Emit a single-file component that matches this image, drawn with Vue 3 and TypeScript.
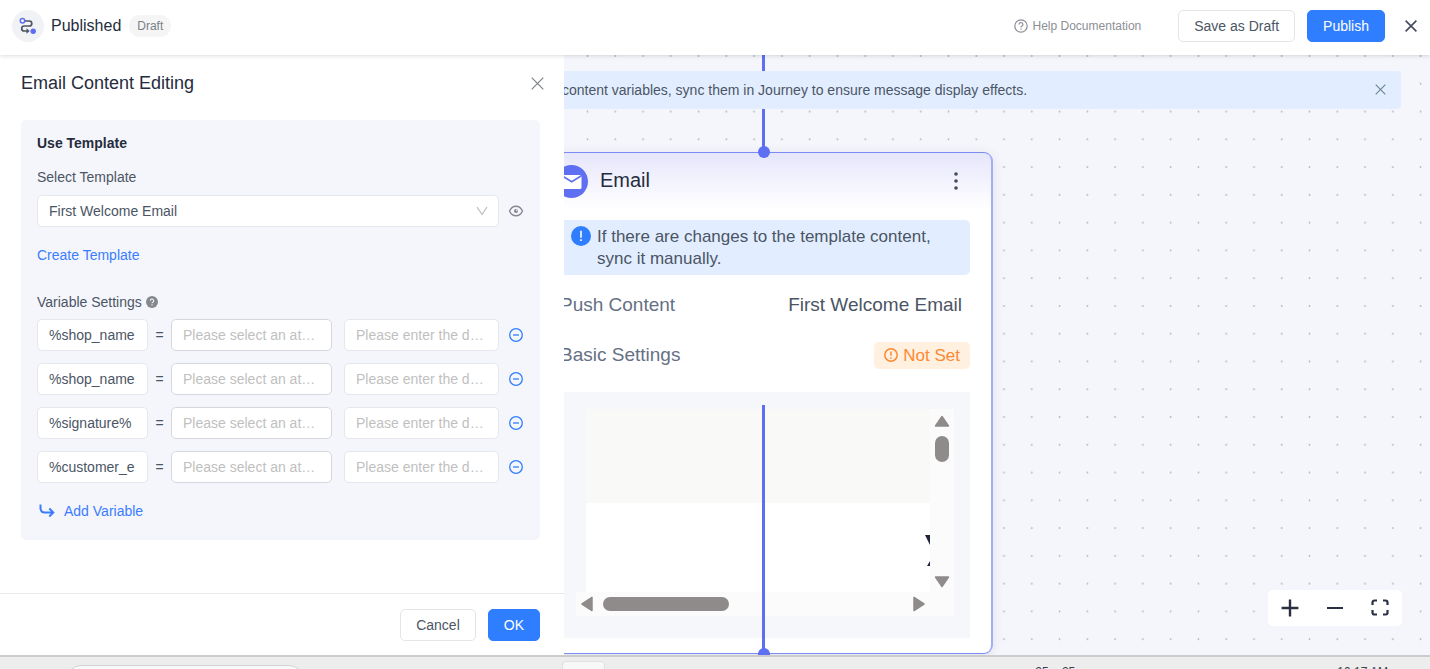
<script setup lang="ts">
import { ref } from 'vue'

interface Variable {
  id: number
  name: string
  attribute: string
  fallback: string
}

const templates: string[] = ['First Welcome Email']
const template = ref<string>('First Welcome Email')

const variables = ref<Variable[]>([
  { id: 1, name: '%shop_name', attribute: '', fallback: '' },
  { id: 2, name: '%shop_name', attribute: '', fallback: '' },
  { id: 3, name: '%signature%', attribute: '', fallback: '' },
  { id: 4, name: '%customer_e', attribute: '', fallback: '' },
])

function removeVariable(id: number): void {
  variables.value = variables.value.filter((v) => v.id !== id)
}

function addVariable(): void {
  variables.value.push({ id: Date.now(), name: '', attribute: '', fallback: '' })
}
</script>

<template>
  <div class="app">
    <header class="topbar">
      <span class="logo">
        <svg width="18" height="18" viewBox="0 0 18 18" fill="none">
          <path d="M5.500 4h4.800a2.500 2.500 0 0 1 0 5H5.200a2.500 2.500 0 0 0 0 5H8" stroke="#4e5464" stroke-width="1.700" />
          <path d="M7.500 11.300v5.400l3.200-2.700z" fill="#4e5464" />
          <circle cx="3.500" cy="3.700" r="2.200" stroke="#5b6cf5" stroke-width="1.500" fill="#fff" />
          <circle cx="14.200" cy="14.200" r="2.700" fill="#5b6cf5" />
        </svg>
      </span>
      <h1 class="title">Published</h1>
      <span class="badge">Draft</span>
      <a class="help" href="#">
        <svg width="14" height="14" viewBox="0 0 14 14" fill="none" stroke="#8c8f96" stroke-width="1.200">
          <circle cx="7" cy="7" r="6.200" />
          <path d="M5.100 5.500a1.900 1.900 0 1 1 2.900 1.600c-.7.400-1 .7-1 1.400" />
          <path d="M7 9.500v1.200" />
        </svg>
        Help Documentation
      </a>
      <button class="btn" type="button">Save as Draft</button>
      <button class="btn primary" type="button">Publish</button>
      <button class="icon-btn exit" type="button" aria-label="Close">
        <svg width="12" height="12" viewBox="0 0 12 12" stroke="#434c5e" stroke-width="1.600"><path d="M.6.6l10.800 10.800M11.400.6.6 11.400" /></svg>
      </button>
    </header>

    <div class="workspace">
      <aside class="drawer">
        <div class="drawer-head">
          <h2>Email Content Editing</h2>
          <button class="icon-btn" type="button" aria-label="Close panel">
            <svg width="13" height="13" viewBox="0 0 13 13" stroke="#7d8087" stroke-width="1.200"><path d="M.7.7l11.600 11.600M12.300.7.7 12.300" /></svg>
          </button>
        </div>

        <div class="drawer-body">
          <section class="panel">
            <h3>Use Template</h3>
            <label class="label" for="template">Select Template</label>
            <div class="template-row">
              <div class="select-wrap">
                <select id="template" v-model="template" class="field">
                  <option v-for="t in templates" :key="t" :value="t">{{ t }}</option>
                </select>
                <svg class="chevron" width="12" height="10" viewBox="0 0 12 10" fill="none" stroke="#b9bcc2" stroke-width="1.200"><path d="M1 1l5 7.500L11 1" /></svg>
              </div>
              <button class="icon-btn" type="button" aria-label="Preview template">
                <svg width="16" height="12" viewBox="0 0 16 12" fill="none" stroke="#85888f" stroke-width="1.400">
                  <path d="M1.500 6c1.400-3 3.600-4.800 6.500-4.800S13.100 3 14.500 6c-1.400 3-3.600 4.800-6.500 4.800S2.900 9 1.500 6z" />
                  <circle cx="8" cy="6" r="2" fill="#85888f" stroke="none" />
                  <circle cx="8.800" cy="5.300" r=".8" fill="#f5f6fb" stroke="none" />
                </svg>
              </button>
            </div>
            <a class="link" href="#">Create Template</a>

            <div class="label settings">
              Variable Settings
              <svg width="12" height="12" viewBox="0 0 12 12" fill="none">
                <circle cx="6" cy="6" r="6" fill="#85888c" />
                <path d="M4.300 4.800a1.700 1.700 0 1 1 2.500 1.400c-.6.300-.8.500-.8 1.100M6 8.300v1.200" stroke="#f5f7fb" stroke-width="1.100" />
              </svg>
            </div>

            <div v-for="v in variables" :key="v.id" class="variable">
              <input v-model="v.name" class="field" type="text" aria-label="Variable name" />
              <span class="equals">=</span>
              <input v-model="v.attribute" class="field strong" type="text" placeholder="Please select an attribute" aria-label="Attribute" />
              <input v-model="v.fallback" class="field default" type="text" placeholder="Please enter the default value" aria-label="Default value" />
              <button class="icon-btn" type="button" aria-label="Remove variable" @click="removeVariable(v.id)">
                <svg width="14" height="14" viewBox="0 0 14 14" fill="none" stroke="#2f7eff" stroke-width="1.300">
                  <circle cx="7" cy="7" r="6.300" />
                  <path d="M4 7h6" />
                </svg>
              </button>
            </div>

            <button class="add" type="button" @click="addVariable">
              <svg width="16" height="16" viewBox="0 0 16 16" fill="none" stroke="#3b7cff" stroke-width="2">
                <path d="M1.500 1.500v3.500c0 3 1.500 4.500 4.500 4.500h7.500M10.300 5.500l4 4-4 4" />
              </svg>
              Add Variable
            </button>
          </section>
        </div>

        <footer class="drawer-foot">
          <button class="btn" type="button">Cancel</button>
          <button class="btn primary" type="button">OK</button>
        </footer>
      </aside>

      <main class="canvas">
        <svg class="dots" width="100%" height="100%" aria-hidden="true">
          <defs>
            <pattern id="grid" x="20" y="0" width="27.770" height="27.770" patternUnits="userSpaceOnUse">
              <circle cx="3.500" cy="1" r=".9" fill="#b3b5ba" />
            </pattern>
          </defs>
          <rect width="100%" height="100%" fill="url(#grid)" />
        </svg>

        <div class="wire wire-in"></div>

        <div class="banner" role="status">
          <p>content variables, sync them in Journey to ensure message display effects.</p>
          <button class="icon-btn" type="button" aria-label="Dismiss">
            <svg width="11" height="11" viewBox="0 0 11 11" stroke="#6f8499" stroke-width="1.200"><path d="M.7.7l9.600 9.600M10.300.7.7 10.300" /></svg>
          </button>
        </div>

        <article class="node">
          <header class="node-head">
            <svg width="33" height="33" viewBox="0 0 33 33">
              <circle cx="16.500" cy="16.500" r="16.500" fill="#5f6ff1" />
              <rect x="7" y="10" width="19.500" height="14" rx="1.500" fill="#fff" />
              <path d="M7 10.700l9.700 6 9.700-6" fill="none" stroke="#5f6ff1" stroke-width="1.600" />
            </svg>
            <h2>Email</h2>
            <button class="icon-btn" type="button" aria-label="Node menu">
              <svg width="4" height="18" viewBox="0 0 4 18" fill="#434a5a"><circle cx="2" cy="2" r="1.800" /><circle cx="2" cy="9" r="1.800" /><circle cx="2" cy="16" r="1.800" /></svg>
            </button>
          </header>

          <div class="notice">
            <svg width="20" height="20" viewBox="0 0 20 20">
              <circle cx="10" cy="10" r="10" fill="#2f7eff" />
              <path d="M10 4.700v7M10 13.200v1.800" stroke="#fff" stroke-width="1.600" />
            </svg>
            <p>If there are changes to the template content, sync it manually.</p>
          </div>

          <dl class="props">
            <div>
              <dt>Push Content</dt>
              <dd>First Welcome Email</dd>
            </div>
            <div>
              <dt>Basic Settings</dt>
              <dd class="unset">
                <svg width="14" height="14" viewBox="0 0 14 14" fill="none" stroke="#fb8a34" stroke-width="1.500"><circle cx="7" cy="7" r="6.200" /><path d="M7 3.500v4.300M7 9.200v1.500" /></svg>
                Not Set
              </dd>
            </div>
          </dl>

          <div class="preview">
            <div class="page">
              <div class="page-top"></div>
              <div class="page-main">
                <svg width="5" height="34" viewBox="0 0 5 34" fill="#20253a"><path d="M0 1h5v10zM5 27v5H2z" /></svg>
              </div>
            </div>
            <div class="vbar">
              <svg width="16" height="12" viewBox="0 0 16 12"><path d="M8 1.500L14.500 11h-13z" fill="#8f8b8b" stroke="#8f8b8b" stroke-width="1.500" stroke-linejoin="round" /></svg>
              <span class="vthumb"></span>
              <svg class="down" width="16" height="12" viewBox="0 0 16 12"><path d="M8 10.500L14.500 1h-13z" fill="#8f8b8b" stroke="#8f8b8b" stroke-width="1.500" stroke-linejoin="round" /></svg>
            </div>
            <div class="hbar">
              <svg width="12" height="16" viewBox="0 0 12 16"><path d="M1 8l10-6.500v13z" fill="#8f8b8b" stroke="#8f8b8b" stroke-width="1.500" stroke-linejoin="round" /></svg>
              <span class="hthumb"></span>
              <svg class="right" width="12" height="16" viewBox="0 0 12 16"><path d="M11 8L1 1.500v13z" fill="#8f8b8b" stroke="#8f8b8b" stroke-width="1.500" stroke-linejoin="round" /></svg>
            </div>
          </div>
        </article>

        <div class="wire wire-out"></div>
        <span class="port port-in"></span>
        <span class="port port-out"></span>

        <div class="zoom">
          <button class="icon-btn" type="button" aria-label="Zoom in">
            <svg width="18" height="18" viewBox="0 0 18 18" stroke="#2a3042" stroke-width="2.400"><path d="M9 .6v16.800M.6 9h16.800" /></svg>
          </button>
          <button class="icon-btn" type="button" aria-label="Zoom out">
            <svg width="18" height="18" viewBox="0 0 18 18" stroke="#2a3042" stroke-width="2"><path d="M1 9h16" /></svg>
          </button>
          <button class="icon-btn" type="button" aria-label="Fit to screen">
            <svg width="18" height="18" viewBox="0 0 18 18" fill="none" stroke="#2a3042" stroke-width="2.200"><path d="M1.500 6V3.500a2 2 0 0 1 2-2H6M12 1.500h2.500a2 2 0 0 1 2 2V6M16.500 11v3a1.500 1.500 0 0 1-1.500 1.500h-3M6 15.500H3.500a2 2 0 0 1-2-2V11" /></svg>
          </button>
        </div>
      </main>
    </div>

    <footer class="taskbar">
      <span class="search"></span>
      <span class="task"></span>
      <span class="temp">25 – 25</span>
      <time class="clock">10:17 AM</time>
    </footer>
  </div>
</template>

<style>
body {
  overflow: hidden;
}
</style>

<style scoped>
* {
  box-sizing: border-box;
}

.app {
  display: flex;
  flex-direction: column;
  height: 100vh;
  font: 14px/20px "Liberation Sans", Arial, sans-serif;
  color: #4b5565;
}

h1, h2, h3, p, dl, dd {
  margin: 0;
}

button, input, select {
  font: inherit;
  color: inherit;
}

svg {
  display: block;
  flex: none;
}

.topbar {
  position: relative;
  z-index: 3;
  display: flex;
  align-items: center;
  height: 55px;
  padding: 0 12px 4px;
  background: #fff;
  box-shadow: 0 1px 4px rgba(0, 0, 0, 0.14);
}

.logo {
  display: flex;
  align-items: center;
  justify-content: center;
  width: 32px;
  height: 32px;
  margin-right: 7px;
  border-radius: 50%;
  background: #f1f2f5;
}

.title {
  font-size: 16px;
  font-weight: 400;
  color: #252c3d;
}

.badge {
  margin-left: 8px;
  padding: 0 8px;
  border-radius: 12px;
  background: #f5f5f6;
  font-size: 12px;
  line-height: 22px;
  color: #7b7f86;
}

.help {
  display: flex;
  align-items: center;
  gap: 5px;
  margin-left: auto;
  margin-right: 37px;
  font-size: 12px;
  color: #8c8f96;
  text-decoration: none;
}

.btn {
  height: 32px;
  padding: 0 15px;
  border: 1px solid #e4e5e8;
  border-radius: 5px;
  background: #fff;
  color: #4b5565;
}

.btn.primary {
  border-color: #2f7eff;
  background: #2f7eff;
  color: #fff;
}

.topbar .btn + .btn {
  margin-left: 12px;
}

.icon-btn {
  display: flex;
  align-items: center;
  justify-content: center;
  padding: 0;
  border: 0;
  background: none;
}

.exit {
  margin-left: 20px;
}

.workspace {
  display: flex;
  flex: 1;
  min-height: 0;
}

.topbar .exit {
  margin-right: 1px;
}

.drawer {
  display: flex;
  flex: none;
  flex-direction: column;
  width: 564px;
  background: #fff;
}

.drawer-head {
  display: flex;
  align-items: center;
  justify-content: space-between;
  height: 56px;
  padding: 0 20px 0 21px;
}

.drawer-head h2 {
  font-size: 18px;
  font-weight: 400;
  color: #252c3d;
}

.drawer-body {
  flex: 1;
  min-height: 0;
  padding: 9px 24px 0 21px;
}

.panel {
  min-height: 420px;
  padding: 13px 16px;
  border-radius: 5px;
  background: #f5f6fb;
}

.panel h3 {
  font-size: 14px;
  color: #252c3d;
}

.label {
  display: block;
  margin: 14px 0 8px;
}

.template-row {
  display: flex;
  gap: 9px;
}

.select-wrap {
  position: relative;
  flex: 1;
}

.chevron {
  position: absolute;
  top: 11px;
  right: 11px;
  pointer-events: none;
}

.field {
  width: 100%;
  min-width: 0;
  height: 32px;
  padding: 0 11px;
  border: 1px solid #e6e7eb;
  border-radius: 5px;
  background: #fff;
  text-overflow: ellipsis;
  appearance: none;
}

.field.strong {
  padding-right: 14px;
  border-color: #d5d7dc;
}

.field::placeholder {
  color: #bfbfbf;
  opacity: 1;
}

.link {
  display: inline-block;
  margin-top: 18px;
  color: #3b7cff;
  text-decoration: none;
}

.settings {
  display: flex;
  align-items: center;
  gap: 4px;
  margin: 27px 0 7px;
}

.variable {
  display: grid;
  grid-template-columns: 111px 23px 161px 167px 1fr;
  align-items: center;
  margin-bottom: 12px;
}

.variable .default {
  width: auto;
  margin-left: 12px;
}

.variable .icon-btn {
  justify-content: flex-end;
  margin-right: 1px;
}

.equals {
  text-align: center;
}

.add {
  display: flex;
  align-items: center;
  gap: 9px;
  margin-top: 18px;
  padding: 0 0 0 2px;
  border: 0;
  background: none;
  color: #3b7cff;
}

.drawer-foot {
  display: flex;
  justify-content: flex-end;
  gap: 12px;
  padding: 15px 24px 14px;
  border-top: 1px solid #e8e9ec;
}

.canvas {
  position: relative;
  flex: 1;
  min-width: 0;
  overflow: hidden;
  background: #f5f6fb;
}

.dots {
  position: absolute;
  inset: 0;
}

.wire {
  position: absolute;
  left: 198px;
  width: 3px;
  background: #5f6ff1;
}

.wire-in {
  top: 0;
  height: 97px;
}

.wire-out {
  top: 350px;
  height: 248px;
}

.port {
  position: absolute;
  left: 194px;
  width: 12px;
  height: 12px;
  border-radius: 50%;
  background: #5f6ff1;
}

.port-in {
  top: 91px;
}

.port-out {
  top: 593px;
}

.banner {
  position: relative;
  display: flex;
  align-items: center;
  justify-content: space-between;
  height: 38px;
  margin: 16px 29px 0 -20px;
  padding: 0 15px 1px 18px;
  border-radius: 4px;
  background: #e2eeff;
  white-space: nowrap;
}

.node {
  position: absolute;
  top: 97px;
  left: -29px;
  width: 458px;
  height: 502px;
  padding: 0 21px 0 22px;
  border: 1px solid #7c8af4;
  border-right: 2px solid #a3adf8;
  border-radius: 9px;
  background: linear-gradient(#e6e6fc, #fff 56px);
  box-shadow: 0 2px 12px rgba(40, 50, 90, 0.1);
}

.node-head {
  display: flex;
  align-items: center;
  height: 56px;
  margin-left: -3px;
}

.node-head h2 {
  margin-left: 12px;
  padding-bottom: 3px;
  font-size: 20px;
  font-weight: 400;
  color: #252c3d;
}

.node-head .icon-btn {
  margin: 0 12px 0 auto;
}

.notice {
  display: flex;
  gap: 6px;
  margin-top: 11px;
  padding: 6px 16px 5px 13px;
  border-radius: 5px;
  background: #e2eeff;
  font-size: 17px;
  line-height: 22px;
}

.props {
  display: grid;
  gap: 22px;
  margin-top: 16px;
  font-size: 19px;
  line-height: 28px;
}

.props > div {
  display: flex;
  align-items: center;
  justify-content: space-between;
}

.props dt {
  margin-left: 2px;
  color: #667085;
}

.props dd {
  margin-right: 8px;
}

.props .unset {
  display: flex;
  align-items: center;
  gap: 5px;
  margin: 0;
  padding: 0 10px;
  border-radius: 5px;
  background: #fff0e0;
  font-size: 17px;
  line-height: 27px;
  color: #fb8a34;
}

.preview {
  display: grid;
  grid-template-columns: 344px 24px;
  grid-template-rows: 183px 24px;
  height: 246px;
  margin-top: 23px;
  padding: 17px 0 0 28px;
  background: #f6f7fa;
}

.page {
  overflow: hidden;
}

.page-top {
  height: 94px;
  background: #f9f9f8;
}

.page-main {
  display: flex;
  justify-content: flex-end;
  height: 89px;
  padding-top: 31px;
  background: #fff;
}

.vbar {
  display: flex;
  flex-direction: column;
  align-items: center;
  padding: 6px 0 4px;
  background: #fbfbfc;
}

.vthumb {
  width: 14px;
  height: 26px;
  margin-top: 9px;
  border-radius: 7px;
  background: #8f8b8b;
}

.down {
  margin-top: auto;
}

.hbar {
  display: flex;
  grid-column: 1 / 3;
  align-items: center;
  margin-left: -10px;
  padding: 0 29px 0 5px;
  background: #fbfbfc;
}

.hthumb {
  width: 126px;
  height: 14px;
  margin-left: 10px;
  border-radius: 7px;
  background: #8f8b8b;
}

.right {
  margin-left: auto;
}

.zoom {
  position: absolute;
  right: 28px;
  bottom: 29px;
  display: flex;
  gap: 27px;
  padding: 9px 13px;
  border-radius: 5px;
  background: #fff;
}

.taskbar {
  position: relative;
  z-index: 2;
  display: flex;
  flex: none;
  height: 14px;
  padding-left: 66px;
  overflow: hidden;
  border-top: 2px solid #cccccf;
  background: #ededee;
  font-size: 12px;
  line-height: 20px;
  color: #3a3f4c;
}

.search {
  width: 238px;
  height: 30px;
  margin-top: 8px;
  border: 1px solid #d3d3d5;
  border-radius: 15px;
  background: #f8f8f8;
}

.task {
  width: 43px;
  height: 30px;
  margin: 4px 0 0 258px;
  border: 1px solid #e0e0e2;
  border-radius: 4px;
  background: #f8f8f9;
}

.temp {
  margin: 5px 0 0 auto;
}

.clock {
  margin: 5px 42px 0 262px;
}
</style>
